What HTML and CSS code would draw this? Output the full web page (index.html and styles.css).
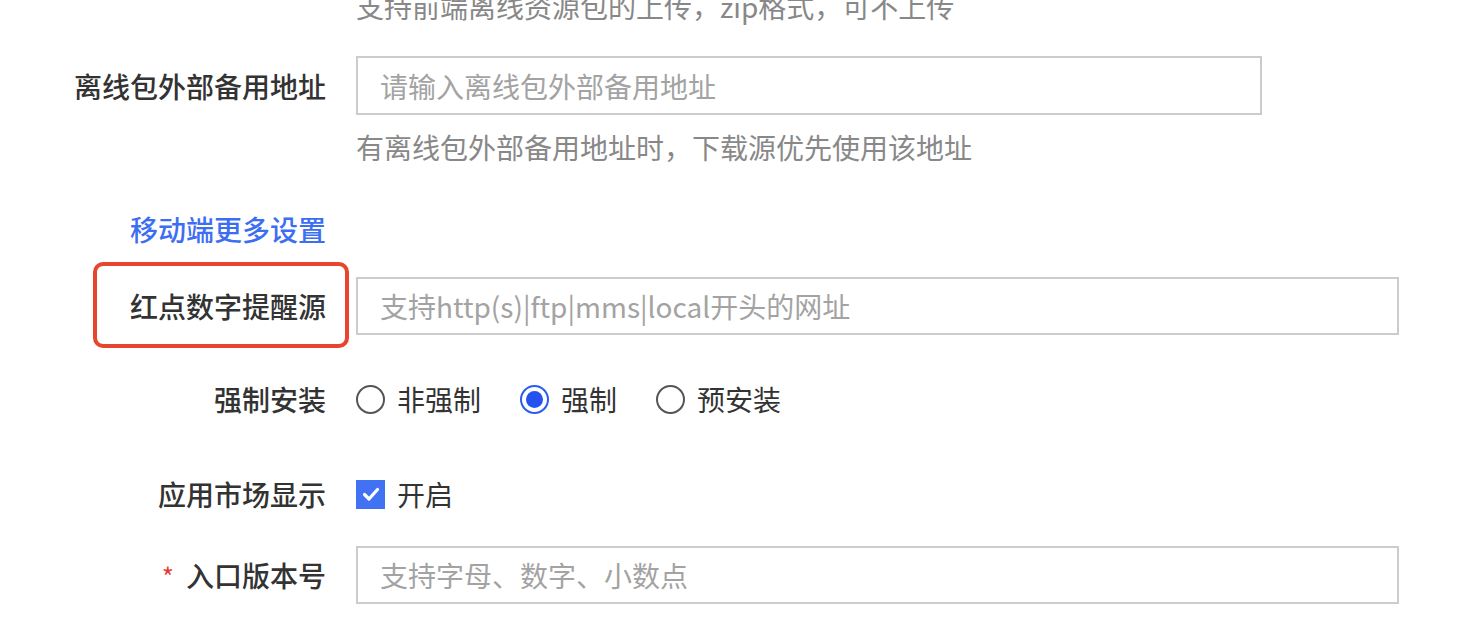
FILE: index.html
```html
<!DOCTYPE html>
<html lang="zh-CN">
<head>
<meta charset="utf-8">
<title>表单</title>
<link rel="stylesheet" href="styles.css">
</head>
<body>
<div class="form">
  <div class="row hint-top">
    <div class="label"></div>
    <div class="hint">支持前端离线资源包的上传，zip格式，可不上传</div>
  </div>

  <div class="row row-input1">
    <div class="label">离线包外部备用地址</div>
    <div class="control"><div class="input short"><span class="ph">请输入离线包外部备用地址</span></div></div>
  </div>
  <div class="row row-hint">
    <div class="label"></div>
    <div class="hint">有离线包外部备用地址时，下载源优先使用该地址</div>
  </div>

  <div class="row row-link">
    <div class="label link">移动端更多设置</div>
    <div></div>
  </div>

  <div class="row row-red">
    <div class="label">红点数字提醒源</div>
    <div class="control"><div class="input"><span class="ph">支持http(s)|ftp|mms|local开头的网址</span></div></div>
    <div class="highlight"></div>
  </div>

  <div class="row row-radio">
    <div class="label">强制安装</div>
    <div class="control options">
      <label class="opt"><span class="radio"></span>非强制</label>
      <label class="opt"><span class="radio checked"></span>强制</label>
      <label class="opt"><span class="radio"></span>预安装</label>
    </div>
  </div>

  <div class="row row-check">
    <div class="label">应用市场显示</div>
    <div class="control options">
      <label class="opt"><span class="checkbox"><svg viewBox="0 0 28 28" width="28" height="28"><path d="M7.5 14.5 L12 19 L20.5 9.5" fill="none" stroke="#fff" stroke-width="3.2" stroke-linecap="round" stroke-linejoin="round"/></svg></span>开启</label>
    </div>
  </div>

  <div class="row row-input3">
    <div class="label"><span class="req">*</span>入口版本号</div>
    <div class="control"><div class="input"><span class="ph">支持字母、数字、小数点</span></div></div>
  </div>
</div>
</body>
</html>
```
FILE: styles.css
```css
html, body {
  margin: 0;
  padding: 0;
  background: #ffffff;
  overflow: hidden;
}
body {
  font-family: "Noto Sans CJK SC", "Noto Sans", sans-serif;
  font-size: 28px;
  color: #333333;
  width: 1482px;
  height: 634px;
}
.form {
  display: flex;
  flex-direction: column;
}
.row {
  position: relative;
  display: grid;
  grid-template-columns: 326px 1fr;
  column-gap: 30px;
  align-items: center;
}
.label {
  text-align: right;
  font-weight: 500;
  color: #333333;
  line-height: 40px;
  white-space: nowrap;
}
.label.link {
  color: #3d6ef2;
}
.req {
  color: #e8392c;
  font-size: 26px;
  margin-right: 12px;
  font-weight: 400;
}
.hint {
  color: #888888;
  line-height: 40px;
  white-space: nowrap;
}
.hint-top {
  margin-top: -14px;
}
.row-input1 { margin-top: 30px; }
.row-hint { margin-top: 12px; }
.row-link { margin-top: 42px; }
.row-red { margin-top: 28px; }
.row-radio { margin-top: 44px; }
.row-check { margin-top: 55px; }
.row-input3 { margin-top: 32px; }

.input {
  box-sizing: border-box;
  width: 1043px;
  height: 58px;
  border: 2px solid #cccccc;
  background: #fff;
  padding-left: 22px;
  display: flex;
  align-items: center;
}
.input.short {
  width: 906px;
  height: 59px;
}
.ph {
  color: #a3a3a3;
  white-space: nowrap;
}
.highlight {
  position: absolute;
  left: 93px;
  top: -15px;
  width: 256px;
  height: 86px;
  box-sizing: border-box;
  border: 4px solid #e8452f;
  border-radius: 10px;
  pointer-events: none;
}
.options {
  display: flex;
  align-items: center;
  line-height: 40px;
}
.opt {
  display: flex;
  align-items: center;
  gap: 12px;
  margin-right: 39px;
  color: #333333;
  white-space: nowrap;
}
.radio {
  box-sizing: border-box;
  width: 29px;
  height: 29px;
  border: 2px solid #555555;
  border-radius: 50%;
  display: inline-block;
  position: relative;
}
.radio.checked {
  border-color: #2a5cf0;
}
.radio.checked::after {
  content: "";
  position: absolute;
  left: 4px;
  top: 4px;
  width: 17px;
  height: 17px;
  border-radius: 50%;
  background: #2452ee;
}
.checkbox {
  width: 29px;
  height: 29px;
  background: #4272f4;
  display: inline-flex;
  align-items: center;
  justify-content: center;
}
.checkbox svg {
  display: block;
}
```
